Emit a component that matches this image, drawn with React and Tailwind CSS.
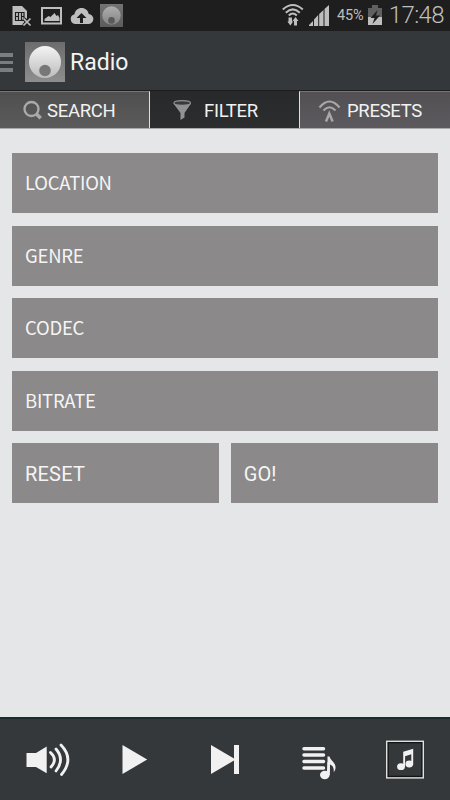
import React from 'react';

const filters = ['LOCATION', 'GENRE', 'CODEC', 'BITRATE'];

const BallIcon = ({ id, className, light, mid, ball, edge, dot }) => (
    <svg viewBox="0 0 40 40" className={className}>
        <defs>
            <linearGradient id={`${id}-bg`} x1="0" y1="0" x2="0" y2="1">
                <stop offset="0" stopColor={mid} />
                <stop offset="1" stopColor={light} />
            </linearGradient>
            <linearGradient id={`${id}-ball`} x1="0" y1="0" x2="0" y2="1">
                <stop offset="0" stopColor={ball} />
                <stop offset="1" stopColor={edge} />
            </linearGradient>
        </defs>
        <rect width="40" height="40" fill={`url(#${id}-bg)`} />
        <circle cx="20" cy="20" r="16" fill={`url(#${id}-ball)`} />
        <circle cx="20" cy="28.5" r="5.8" fill={dot} />
    </svg>
);

const StatusBar = () => (
    <div className="flex h-[31px] bg-[#1e1e1e] text-[#bebebe]">
        <svg width="98" height="31" viewBox="0 0 98 31" fill="none">
            <path d="M12.500 6H22l5 5v7l-4 7H12.500z" fill="#bebebe" />
            <path d="M15.500 12.500h8.500v8h-8.500zM18.500 12.500v8M21.500 12.500v8M15.500 16.500h3M21.500 16.500h3" stroke="#1e1e1e" strokeWidth="1.200" />
            <path d="M23.500 18.500l7 7M30.500 18.500l-7 7" stroke="#1e1e1e" strokeWidth="3.500" />
            <path d="M23.500 18.500l7 7M30.500 18.500l-7 7" stroke="#bebebe" strokeWidth="1.700" />
            <path d="M42 8h19v15.500H42z" stroke="#bebebe" strokeWidth="2" />
            <path d="M44.500 21v-2l4-3 2 1 4-4 2 3 1.500-1 1.500 3v3z" fill="#bebebe" />
            <path d="M75 24a5 5 0 0 1-.5-9.800C75 10.500 78 8 81.500 8c4 0 6.500 2.500 7.200 6A5 5 0 0 1 88 24z" fill="#bebebe" />
            <path d="M81.500 13l5 5H83v5h-3v-5h-3.500z" fill="#1e1e1e" />
        </svg>
        <BallIcon id="small" className="ml-[2px] mt-1 h-[23px] w-[23px]" light="#5c5c5c" mid="#737373" ball="#adadad" edge="#858585" dot="#5a5a5a" />
        <svg width="52" height="31" viewBox="280 0 52 31" fill="none" className="ml-[157px]">
            <g stroke="#bebebe" strokeWidth="2">
                <path d="M282.800 9.500Q292.800 .5 302.800 9.500" />
                <path d="M285.800 12.700Q292.800 6 299.800 12.700" />
                <path d="M288.800 15.500Q292.800 11.500 296.800 15.500" />
            </g>
            <path d="M288.500 17.500h3.500v4h1.200l-2.900 4-2.900-4h1.100zM294 25.500h3v-4.500h1.500l-3-4-3 4h1.500z" fill="#bebebe" />
            <path d="M309 26v-1l4-4v5zM314 26v-6.500l4.200-4.500V26zM319.200 26V14l4.300-4v16zM324.500 26V9l4.500-4V26z" fill="#bebebe" />
        </svg>
        <span className="ml-[5px] mt-[6px] font-['Roboto'] text-[14.500px] leading-5 tracking-[-0.1px]">45%</span>
        <svg width="16" height="31" viewBox="367 0 16 31" className="ml-auto shrink-0">
            <path d="M368 8h4V5h6v3h4v9h-14z" fill="#606060" />
            <path d="M368 17h14v8h-14z" fill="#bebebe" />
            <path d="M377.500 10l-7 8h4l-2 6 7.500-8.500h-4z" fill="#1e1e1e" />
        </svg>
        <span className="ml-[6px] mr-[6px] font-['Roboto'] text-[24px] font-light leading-[31px] tracking-[-0.6px]">17:48</span>
    </div>
);

const Header = () => (
    <div className="flex h-[59px] items-center bg-[#34383b]">
        <div className="flex w-[13px] flex-col gap-[4px] pt-1">
            <div className="h-[3.500px] bg-[#7b7d7f]" />
            <div className="h-[3.500px] bg-[#7b7d7f]" />
            <div className="h-[3.500px] bg-[#7b7d7f]" />
        </div>
        <BallIcon id="logo" className="ml-3 mt-[2px] h-10 w-10" light="#8e8e8e" mid="#6c6c6c" ball="#f4f4f4" edge="#bcbcbc" dot="#777777" />
        <h1 className="ml-[5px] mt-[4px] font-['Roboto'] text-[23px] leading-7 text-[#f3f3f3]">Radio</h1>
    </div>
);

const Tabs = () => (
    <div className="flex h-[39px] border-b border-t border-b-[#aaa] border-t-[#1b1d1e] font-['Roboto'] text-[18.500px] leading-[38px] tracking-[-0.3px] text-[#f2f2f2]">
        <div className="flex w-[150px] border-r border-t border-r-[#dedede] border-t-[#757575] bg-[linear-gradient(#4f4f4f,#5b5b5c)]">
            <svg width="24" height="36" viewBox="20 92 24 36" fill="none" stroke="#aaa" className="ml-5">
                <circle cx="31.500" cy="109" r="7" strokeWidth="2.300" />
                <path d="M36 113.500l4.700 4.700" strokeWidth="3.500" />
            </svg>
            <span className="ml-[3px]">SEARCH</span>
        </div>
        <div className="flex w-[149px] bg-[linear-gradient(#28292a,#2c2d2e)]">
            <svg width="24" height="37" viewBox="170 91 24 37" className="ml-5">
                <path d="M173.500 103.500l7 9.500v7l4-2.500V113l6.500-9.500z" fill="#929292" />
                <ellipse cx="182.200" cy="103" rx="8.300" ry="2.300" fill="#3a3a3a" stroke="#929292" strokeWidth="1.200" />
            </svg>
            <span className="ml-[10px] mt-px">FILTER</span>
        </div>
        <div className="flex flex-1 border-l border-t border-l-[#dedede] border-t-[#757575] bg-[linear-gradient(#525053,#5c5a5e)]">
            <svg width="24" height="36" viewBox="317 92 24 36" fill="none" stroke="#a8a8a8" strokeWidth="2.200" className="ml-[17px]">
                <path d="M319.500 107.500Q329.500 95.500 339.500 107.500M323.500 110.500Q329.500 104 335.500 110.500" />
                <path d="M326 121.500l3.300-8 3.300 8" strokeWidth="2.500" />
            </svg>
            <span className="ml-[6px]">PRESETS</span>
        </div>
    </div>
);

const Player = () => (
    <div className="h-[83px] border-t-2 border-[#1c2b2d] bg-[#34383b]">
        <svg width="450" height="81" viewBox="0 719 450 81" fill="#f1f1f1">
            <path d="M26.500 753H36l10.700-6.500v26.700L36 767h-9.500z" />
            <g fill="none" stroke="#f1f1f1" strokeWidth="2.800" strokeLinecap="round">
                <path d="M50.500 752.500Q58 759.500 51 767M56 749Q65 759.500 56 771M61 745Q74.500 759 61.500 774.500" />
            </g>
            <path d="M122.500 745l24.700 14.500-24.700 14.500z" />
            <path d="M211 745l23 13.500V745h5v29h-5v-13.500L211 774z" />
            <g stroke="#f1f1f1" strokeWidth="3.500" strokeLinecap="round">
                <path d="M304 748.700h19.500M304 755h19.500M304 761.500h19.500M304 768h19.500" />
            </g>
            <g stroke="#34383b" strokeWidth="1.500" paintOrder="stroke">
                <path d="M327.500 756.500h2c.8 4 6.500 6 6 11.500-.1 1.700-.8 3-1.800 4.200.5-5-1.500-7-3.900-7.700V775h-2.300z" />
                <ellipse cx="324.800" cy="775" rx="4.800" ry="4.200" />
            </g>
            <path d="M327.500 762h2.300v13h-3z" />
            <rect x="388" y="742.500" width="34" height="34" fill="none" stroke="#111314" strokeWidth="1.500" />
            <rect x="386.700" y="741.300" width="36.600" height="36.600" fill="none" stroke="#e2e0de" strokeWidth="1.400" />
            <path d="M403.200 751.700l10-3v16h-1.900v-10.500l-6.200 2v10.500h-1.900z" />
            <ellipse cx="401" cy="766.700" rx="3.900" ry="3.400" />
            <ellipse cx="409.300" cy="764" rx="3.800" ry="3.400" />
        </svg>
    </div>
);

const App = () => {
    return (
        <div className="flex h-[800px] w-[450px] flex-col overflow-hidden bg-[#e5e6e8]">
            <StatusBar />
            <Header />
            <Tabs />
            <div className="flex flex-1 flex-col gap-[12.500px] pl-[12.400px] pr-[12.400px] pt-[24.300px] text-[#f5f5f5]">
                {filters.map((name) => (
                    <div key={name} className="flex h-[60px] items-center bg-[#8b8989] pl-[12.600px] font-['Noto_Sans_CJK_SC',sans-serif] text-[18.500px] font-normal tracking-[-0.25px]">
                        {name}
                    </div>
                ))}
                <div className="flex h-[60px] gap-[12.500px] font-['Roboto'] text-[20px]">
                    <div className="flex flex-1 items-center bg-[#8b8989] pl-[12.600px] pt-[2px] tracking-[0.2px]">RESET</div>
                    <div className="flex flex-1 items-center bg-[#8b8989] pl-[12.600px] pt-[2px]">GO!</div>
                </div>
            </div>
            <Player />
        </div>
    );
};

export default App;
